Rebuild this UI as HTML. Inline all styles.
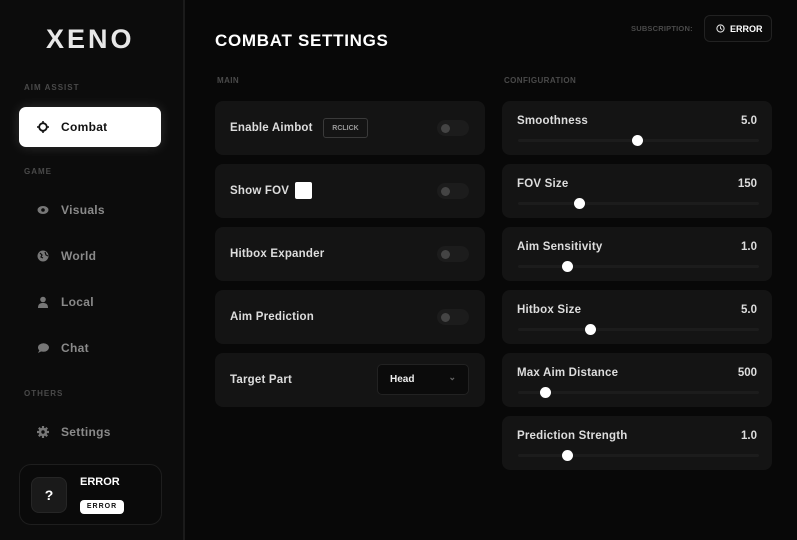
<!DOCTYPE html>
<html><head><style>
*{box-sizing:border-box;margin:0;padding:0}
body{width:797px;height:540px;background:#080808;font-family:"Liberation Sans",sans-serif;position:relative;overflow:hidden;color:#ddd}
.sb{position:absolute;left:0;top:0;width:185px;height:540px;background:#0c0c0c;border-right:2px solid #1b1b1b}
.logo{position:absolute;left:46px;top:24px;font-size:27px;font-weight:bold;letter-spacing:3px;color:#e8e8e8}
.sec{position:absolute;left:24px;font-size:8px;font-weight:bold;letter-spacing:1px;color:#4a4a4a}
.nav{position:absolute;left:19px;width:142px;height:40px;font-size:12px;font-weight:bold;color:#8a8a8a;display:flex;align-items:center;padding-left:18px;letter-spacing:.3px}
.nav svg{margin-right:12px}
.nav.act{background:#fff;color:#111;border-radius:7px;box-shadow:0 0 12px rgba(255,255,255,.15)}
.prof{position:absolute;left:19px;top:464px;width:143px;height:61px;border:1px solid #1e1e1e;border-radius:12px;background:#0a0a0a}
.av{position:absolute;left:11px;top:12px;width:36px;height:36px;background:#1a1a1a;border:1px solid #262626;border-radius:8px;color:#fff;font-weight:bold;font-size:14px;text-align:center;line-height:34px}
.title{position:absolute;left:215px;top:31px;font-size:17px;font-weight:bold;color:#fff;letter-spacing:.7px}
.lbl{position:absolute;top:76px;font-size:8px;font-weight:bold;color:#4a4a4a;letter-spacing:.4px}
.card{position:absolute;width:270px;height:54px;background:#141414;border-radius:8px}
.card .t{position:absolute;left:15px;top:21px;font-size:11.5px;font-weight:bold;color:#ddd;letter-spacing:.2px}
.tog{position:absolute;left:222px;top:19px;width:32px;height:16px;border-radius:8px;background:#1c1c1c}
.tog:after{content:"";position:absolute;left:4px;top:3.5px;width:9px;height:9px;border-radius:50%;background:#444}
.rc .t{top:14px}
.rc .v{position:absolute;right:15px;top:14px;font-size:11.5px;font-weight:bold;color:#ddd}
.trk{position:absolute;left:16px;right:13px;top:38px;height:3px;background:#1c1c1c;border-radius:2px}
.th{position:absolute;top:34px;width:11px;height:11px;border-radius:50%;background:#fff}
</style></head><body>
<div class="sb">
<div class="logo">XENO</div>
<div class="sec" style="top:83px">AIM ASSIST</div>
<div class="nav act" style="top:107px"><svg width="12" height="12" viewBox="0 0 12 12"><circle cx="6" cy="6" r="3.8" fill="none" stroke="#111" stroke-width="1.8"/><path d="M6 0v3M6 9v3M0 6h3M9 6h3" stroke="#111" stroke-width="1.5"/></svg>Combat</div>
<div class="sec" style="top:167px">GAME</div>
<div class="nav" style="top:190px"><svg width="12" height="12" viewBox="0 0 12 12"><ellipse cx="6" cy="6" rx="5.5" ry="4" fill="#777"/><circle cx="6" cy="6" r="1.8" fill="#0c0c0c"/></svg>Visuals</div>
<div class="nav" style="top:236px"><svg width="12" height="12" viewBox="0 0 12 12"><circle cx="6" cy="6" r="5.5" fill="#777"/><path d="M3 3l2 2-1 2 2 1M8 2l1 3 2 1" stroke="#0c0c0c" stroke-width="1.2" fill="none"/></svg>World</div>
<div class="nav" style="top:282px"><svg width="12" height="12" viewBox="0 0 12 12"><circle cx="6" cy="3.5" r="2.8" fill="#777"/><path d="M1 12c0-4 2-5 5-5s5 1 5 5z" fill="#777"/></svg>Local</div>
<div class="nav" style="top:328px"><svg width="12" height="12" viewBox="0 0 12 12"><ellipse cx="6.5" cy="5.5" rx="5.5" ry="4.3" fill="#777"/><path d="M1 11l2-4 2 2z" fill="#777"/></svg>Chat</div>
<div class="sec" style="top:389px">OTHERS</div>
<div class="nav" style="top:412px"><svg width="12" height="12" viewBox="0 0 12 12"><circle cx="6" cy="6" r="4.2" fill="#777"/><path d="M6 0v12M0 6h12M1.8 1.8l8.4 8.4M10.2 1.8l-8.4 8.4" stroke="#777" stroke-width="2.2"/><circle cx="6" cy="6" r="1.7" fill="#0c0c0c"/></svg>Settings</div>
<div class="prof"><div class="av">?</div>
<div style="position:absolute;left:60px;top:11px;font-size:11px;font-weight:bold;color:#fff">ERROR</div>
<div style="position:absolute;left:60px;top:35px;width:44px;height:14px;background:#fff;border-radius:4px;color:#111;font-size:7px;font-weight:bold;letter-spacing:1px;text-align:center;line-height:14px">ERROR</div></div>
</div>
<div class="title">COMBAT SETTINGS</div>
<div style="position:absolute;left:631px;top:24px;font-size:7.5px;font-weight:bold;color:#4a4a4a;letter-spacing:.2px">SUBSCRIPTION:</div>
<div style="position:absolute;left:704px;top:15px;width:68px;height:27px;border:1px solid #222;border-radius:6px;background:#0b0b0b;font-size:9px;font-weight:bold;color:#fff;padding:8px 0 0 11px"><svg width="9" height="9" viewBox="0 0 10 10" style="vertical-align:-1px;margin-right:5px"><circle cx="5" cy="5" r="4" fill="none" stroke="#ddd" stroke-width="1.2"/><path d="M5 2.5V5l1.8 1.2" stroke="#ddd" fill="none" stroke-width="1.1"/></svg>ERROR</div>
<div class="lbl" style="left:217px">MAIN</div>
<div class="lbl" style="left:504px">CONFIGURATION</div>

<div class="card" style="left:215px;top:101px"><div class="t">Enable Aimbot</div><div style="position:absolute;left:108px;top:17px;width:45px;height:20px;border:1px solid #3a3a3a;border-radius:3px;font-size:7px;font-weight:bold;color:#999;text-align:center;line-height:19px">RCLICK</div><div class="tog"></div></div>
<div class="card" style="left:215px;top:164px"><div class="t">Show FOV</div><div style="position:absolute;left:80px;top:18px;width:17px;height:17px;background:#fff;border-radius:2px"></div><div class="tog"></div></div>
<div class="card" style="left:215px;top:227px"><div class="t">Hitbox Expander</div><div class="tog"></div></div>
<div class="card" style="left:215px;top:290px"><div class="t">Aim Prediction</div><div class="tog"></div></div>
<div class="card" style="left:215px;top:353px"><div class="t">Target Part</div><div style="position:absolute;left:162px;top:11px;width:92px;height:31px;background:#0b0b0b;border:1px solid #222;border-radius:5px;font-size:10px;font-weight:bold;color:#eee;padding:9px 0 0 12px">Head<span style="position:absolute;right:12px;top:7px;color:#666;font-size:9px">&#8964;</span></div></div>

<div class="card rc" style="left:502px;top:101px"><div class="t">Smoothness</div><div class="v">5.0</div><div class="trk"></div><div class="th" style="left:130px"></div></div>
<div class="card rc" style="left:502px;top:164px"><div class="t">FOV Size</div><div class="v">150</div><div class="trk"></div><div class="th" style="left:72px"></div></div>
<div class="card rc" style="left:502px;top:227px"><div class="t">Aim Sensitivity</div><div class="v">1.0</div><div class="trk"></div><div class="th" style="left:60px"></div></div>
<div class="card rc" style="left:502px;top:290px"><div class="t">Hitbox Size</div><div class="v">5.0</div><div class="trk"></div><div class="th" style="left:83px"></div></div>
<div class="card rc" style="left:502px;top:353px"><div class="t">Max Aim Distance</div><div class="v">500</div><div class="trk"></div><div class="th" style="left:38px"></div></div>
<div class="card rc" style="left:502px;top:416px"><div class="t">Prediction Strength</div><div class="v">1.0</div><div class="trk"></div><div class="th" style="left:60px"></div></div>
</body></html>
